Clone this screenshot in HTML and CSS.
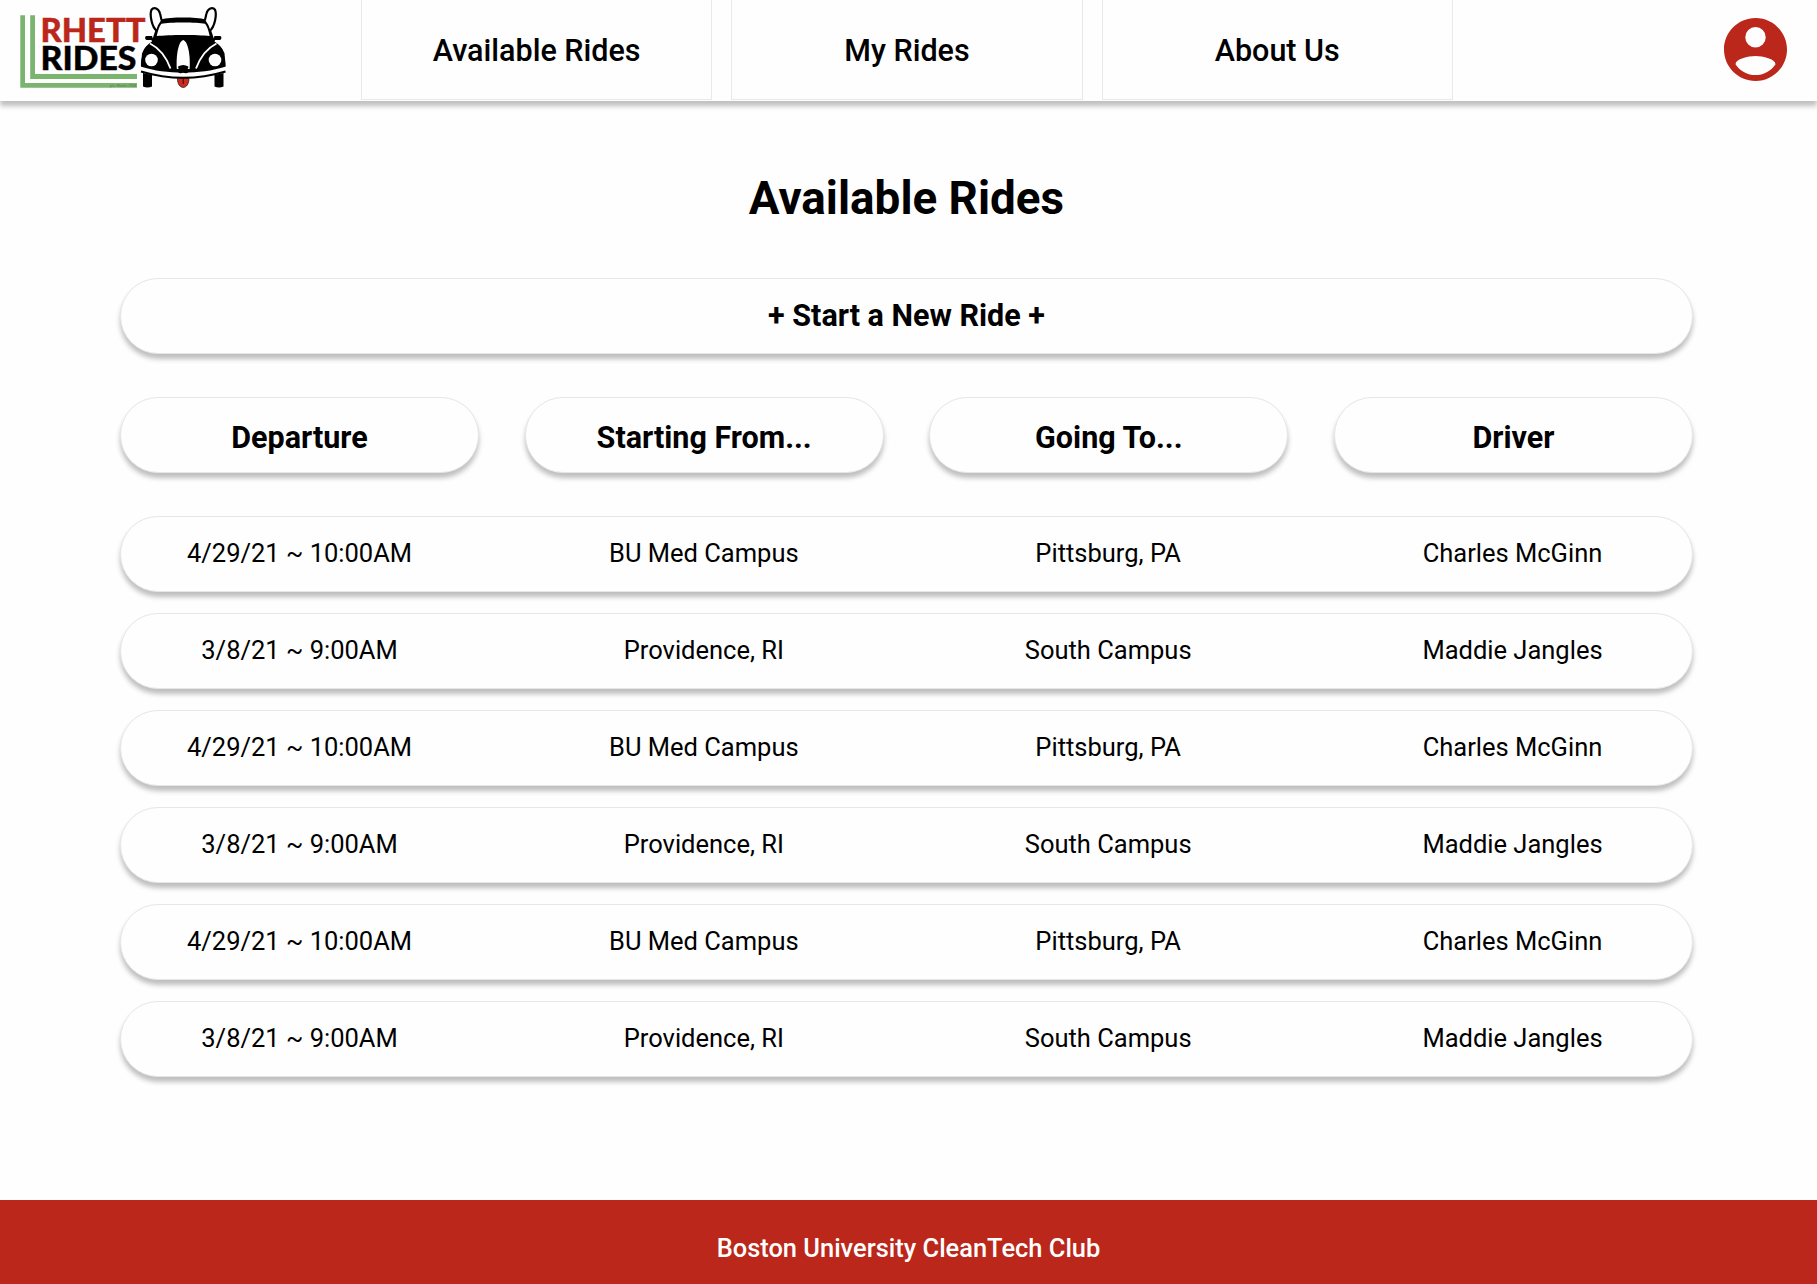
FILE: index.html
```html
<!DOCTYPE html>
<html lang="en">
<head>
<meta charset="utf-8">
<title>Rhett Rides</title>
<link rel="stylesheet" href="styles.css">
</head>
<body>
<header class="header">
  <a class="logo">
    <svg viewBox="10 0 230 100" width="230" height="100" role="img" aria-label="Rhett Rides">
      <path class="logo-green" d="M20.300 15.300h4.700v67.700h112v4.800H20.300zM30.200 15.300h4.800v58.700h102v5H30.200z"/>
      <text class="logo-text logo-red" x="40.500" y="42" textLength="105" lengthAdjust="spacingAndGlyphs">RHETT</text>
      <text class="logo-text" x="40.500" y="69.500" textLength="96" lengthAdjust="spacingAndGlyphs">RIDES</text>
      <text class="logo-credit" x="110" y="86.600" textLength="26" lengthAdjust="spacingAndGlyphs">p/c: Rhett's 1958</text>
      <g>
        <path d="M152.500 39.500C155 31 157.500 23.500 161.500 19.500c8-2.600 35.500-2.600 43.500 0 4 4 6.500 11.500 9 20z"/>
        <path class="ear" d="M157 31C151.500 27 149.500 14 151.500 9.700 154 6.500 158.700 8.500 160 13.500c.8 2.800 1 5.500 2 7.500-2 2.500-4 6-5 10z"/>
        <path class="ear" d="M209.500 31C215 27 217 14 215 9.700 212.500 6.500 207.800 8.500 206.500 13.500c-.8 2.800-1 5.500-2 7.500 2 2.500 4 6 5 10z"/>
        <path class="white" d="M156.800 36c.8-4 2.500-10 4.700-12.300 8-1.600 35.500-1.600 43.500 0 2.200 2.300 3.900 8.300 4.700 12.300-12-1.500-41-1.500-52.900 0z"/>
        <path d="M153 38.500c14-2.500 46.500-2.500 60.500 0 5 4 9 9 11 15l1 15-26.500 5h-31.500l-26.500-5 1-15c2-6 6-11 11-15z"/>
        <path class="white" d="M140 35h9.500l2.500 6.500c-5 3-8 7-9.500 10l-2.500-2zM226.500 35H217l-2.500 6.500c5 3 8 7 9.500 10l2.500-2z"/>
        <path d="M146 36h6l1.500 4h-7.200q-2.300-2-.3-4zM220.500 36h-6l-1.500 4h7.200q2.300-2 .3-4z"/>
        <path d="M141 67c-.6-10 2.500-17.500 10.500-18.500 8.500 2 13 10 17 20zM225.500 67c.6-10-2.500-17.500-10.500-18.500-8.500 2-13 10-17 20z"/>
        <path class="seam" d="M150 43.500c9 4.500 16 13 20.500 25M216.500 43.500c-9 4.500-16 13-20.500 25"/>
        <path class="white" d="M183.200 40c-5 1.500-7.300 16-6.400 29h12.800c.9-13-1.400-27.500-6.400-29z"/>
        <circle class="white" cx="151.500" cy="60" r="6.300"/><circle class="white" cx="215" cy="60" r="6.300"/>
        <path d="M143 73l9 2v11.500q-4.500 2-9 0zM223.500 73l-9 2v11.500q4.500 2 9 0z"/>
        <path class="white" d="M140.500 66.500c14 4.500 28 6 42.700 6s28.800-1.500 42.800-6l.5 4c-14 4.500-27 7-43.300 7s-29.200-2.500-43.200-7z"/>
        <path class="bumper" d="M141 71.500c28 8.400 56.500 8.400 84.500 0"/>
        <path class="tongue" d="M177.500 78.500h11.400c.3 5-2.500 9-5.700 9s-6-4-5.700-9z"/>
        <path class="seam-dark" d="M183.200 78v6"/>
        <path d="M178 66.500q5.200-3.200 10.400 0 0 3.500-4.200 4.500v1.500h-2V71q-4.200-1-4.200-4.500z"/>
        <path class="mouth" d="M177.500 70.500q2.500 4 5.700.8 3.200 3.200 5.700-.8"/>
      </g>
    </svg>
  </a>
  <nav class="nav">
    <a class="tab">Available Rides</a>
    <a class="tab">My Rides</a>
    <a class="tab">About Us</a>
  </nav>
  <svg class="avatar" viewBox="2 2 20 20" aria-label="Account">
    <path d="M12 2C6.480 2 2 6.480 2 12s4.480 10 10 10 10-4.480 10-10S17.520 2 12 2zm0 2.850a3.250 3.250 0 1 1 0 6.500 3.250 3.250 0 0 1 0-6.500zm0 15.250c-2.500 0-4.900-1.200-6.350-3.450C5.700 15 9.600 14.050 12 14.050s6.300.95 6.350 2.600C16.900 18.900 14.500 20.100 12 20.100z"/>
  </svg>
</header>
<main class="main">
  <h1 class="title">Available Rides</h1>
  <a class="pill new-ride">+ Start a New Ride +</a>
  <div class="columns">
    <div class="pill column">Departure</div>
    <div class="pill column">Starting From...</div>
    <div class="pill column">Going To...</div>
    <div class="pill column">Driver</div>
  </div>
  <div class="rides">
    <div class="pill ride"><span>4/29/21 ~ 10:00AM</span><span>BU Med Campus</span><span>Pittsburg, PA</span><span>Charles McGinn</span></div>
    <div class="pill ride"><span>3/8/21 ~ 9:00AM</span><span>Providence, RI</span><span>South Campus</span><span>Maddie Jangles</span></div>
    <div class="pill ride"><span>4/29/21 ~ 10:00AM</span><span>BU Med Campus</span><span>Pittsburg, PA</span><span>Charles McGinn</span></div>
    <div class="pill ride"><span>3/8/21 ~ 9:00AM</span><span>Providence, RI</span><span>South Campus</span><span>Maddie Jangles</span></div>
    <div class="pill ride"><span>4/29/21 ~ 10:00AM</span><span>BU Med Campus</span><span>Pittsburg, PA</span><span>Charles McGinn</span></div>
    <div class="pill ride"><span>3/8/21 ~ 9:00AM</span><span>Providence, RI</span><span>South Campus</span><span>Maddie Jangles</span></div>
  </div>
</main>
<footer class="footer">Boston University CleanTech Club</footer>
</body>
</html>
```
FILE: styles.css
```css
* { box-sizing: border-box; }
body {
  margin: 0;
  height: 1284px;
  display: flex;
  flex-direction: column;
  overflow: hidden;
  background: #fefefe;
  color: #000;
  font-family: Roboto, sans-serif;
}
.header {
  display: flex;
  flex: none;
  height: 101px;
  padding: 0 30px 0 10px;
  background: #fefefe;
  box-shadow: 0 5px 5px rgba(0, 0, 0, .25);
}
.logo { width: 351px; }
.logo svg { display: block; }
.logo-green { fill: #7ab46e; }
.logo-text { font: 900 33px Lato, sans-serif; stroke: #000; stroke-width: .4; }
.logo-red { fill: #bb271a; stroke: #bb271a; }
.logo-credit { font: 3.500px "Liberation Sans", sans-serif; fill: #4c7a44; }
.ear { fill: #fefefe; stroke: #000; stroke-width: 2.200; }
.white { fill: #fefefe; }
.seam { fill: none; stroke: #fefefe; stroke-width: 1.900; }
.bumper { fill: none; stroke: #000; stroke-width: 2.200; }
.tongue { fill: #cf2a1e; stroke: #000; stroke-width: .6; }
.seam-dark { stroke: #000; stroke-width: .8; }
.mouth { fill: none; stroke: #000; stroke-width: 1.300; }
.nav { display: flex; gap: 19px; }
.tab {
  width: 351.300px;
  height: 100px;
  border: solid #e9e9e9;
  border-width: 0 1.260px 1.260px;
  font-size: 30.500px;
  font-weight: 500;
  line-height: 101px;
  text-align: center;
}
.avatar {
  width: 63px;
  height: 63px;
  margin: 18px 0 0 auto;
  fill: #bb271a;
}
.main { flex: 1; padding: 0 124px 0 120px; }
.title {
  margin: 71px 0 52.500px;
  font-size: 45.800px;
  font-weight: 700;
  line-height: 53px;
  text-align: center;
}
.pill {
  height: 76px;
  border: 1px solid #e6e6e6;
  border-radius: 38px;
  background: #fefefe;
  box-shadow: 0 5px 5px rgba(0, 0, 0, .25);
  text-align: center;
}
.new-ride {
  display: block;
  font-size: 30.500px;
  font-weight: 700;
  line-height: 74px;
}
.columns {
  display: grid;
  grid-template-columns: repeat(4, 359px);
  justify-content: space-between;
  margin-top: 43.500px;
}
.column { font-size: 30.500px; font-weight: 700; line-height: 79px; }
.rides { display: grid; gap: 21px; margin-top: 43px; }
.ride {
  display: grid;
  grid-template-columns: repeat(4, 357px);
  justify-content: space-between;
  padding-right: 1px;
  font-size: 25.500px;
  line-height: 73px;
}
.footer {
  flex: none;
  height: 84px;
  padding-top: 8px;
  background: #bb271a;
  color: #fff;
  font-size: 25.450px;
  font-weight: 500;
  line-height: 80px;
  text-align: center;
}
```
